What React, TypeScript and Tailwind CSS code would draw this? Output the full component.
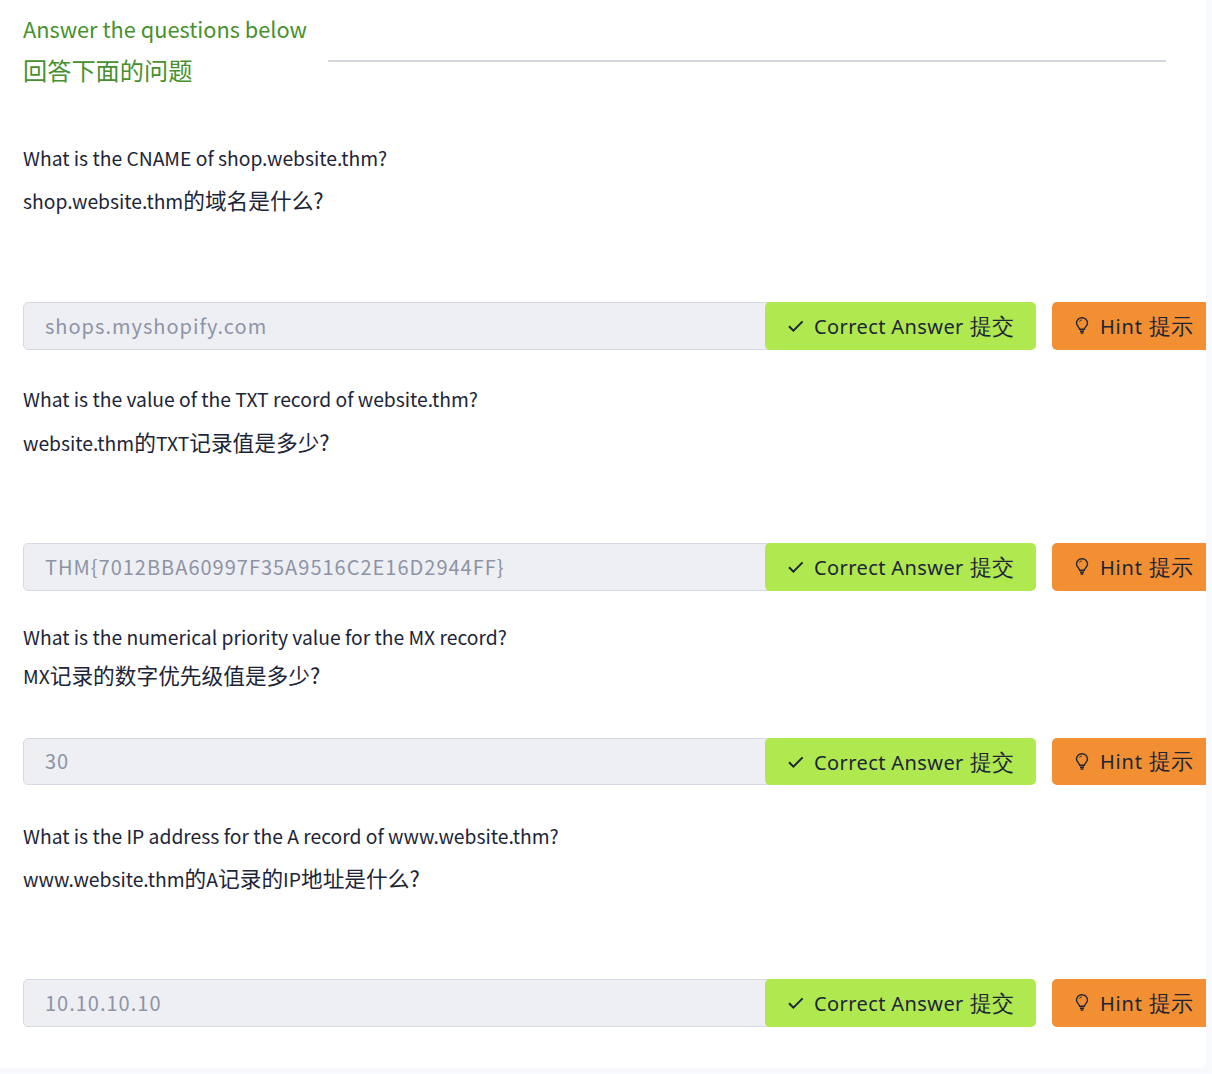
const cjk = '[font-family:"Noto_Sans_CJK_SC",sans-serif]';

const questions = [
  {
    en: 'What is the CNAME of shop.website.thm?',
    zh: 'shop.website.thm的域名是什么?',
    answer: 'shops.myshopify.com',
    gap: 'mt-[7px]',
    wrap: 'mt-[49px]',
    row: 'mt-[83px]',
    rowH: 'h-12',
  },
  {
    en: 'What is the value of the TXT record of website.thm?',
    zh: 'website.thm的TXT记录值是多少?',
    answer: 'THM{7012BBA60997F35A9516C2E16D2944FF}',
    gap: 'mt-[8px]',
    wrap: 'mt-[31px]',
    row: 'mt-[82px]',
    rowH: 'h-12',
  },
  {
    en: 'What is the numerical priority value for the MX record?',
    zh: 'MX记录的数字优先级值是多少?',
    answer: '30',
    gap: 'mt-[3px]',
    wrap: 'mt-[28px]',
    row: 'mt-[44px]',
    rowH: 'h-[47px]',
  },
  {
    en: 'What is the IP address for the A record of www.website.thm?',
    zh: 'www.website.thm的A记录的IP地址是什么?',
    answer: '10.10.10.10',
    gap: 'mt-[7px]',
    wrap: 'mt-[33px]',
    row: 'mt-[82px]',
    rowH: 'h-12',
  },
];

// latin and chinese runs are different sizes in the original
function Mixed({ text }: { text: string }) {
  return (
    <>
      {text.split(/([\u4e00-\u9fff?]+)/).map((part, i) =>
        i % 2 === 1 ? (
          <span key={i} className="text-[21.7px] leading-none">
            {part}
          </span>
        ) : (
          part
        ),
      )}
    </>
  );
}

function Bulb() {
  return (
    <svg width="14" height="18" viewBox="0 0 14 18" fill="none" stroke="currentColor" className="mr-[11px] shrink-0">
      <path d="M4.6 12.2C4.4 10 1.5 8.8 1.5 5.9a5.5 5.2 0 0 1 11 0c0 2.9-2.9 4.1-3.1 6.3z" strokeWidth="1.4" />
      <path d="M4.2 4.6A3 3 0 0 1 6.8 3" strokeWidth="1" />
      <path d="M5 14.2h4M5.6 16h2.8" strokeWidth="1.6" />
    </svg>
  );
}

function AnswerRow({ answer, row, rowH }: { answer: string; row: string; rowH: string }) {
  return (
    <div className={`flex items-stretch ${rowH} ${row}`}>
      <div className="flex w-[752px] shrink-0 items-center rounded-l-[5px] border border-[#d5d9e2] bg-[#eeeff3] pb-[1px] pl-[21px] text-[20px] tracking-[1px] text-[#8c94a6]">
        {answer}
      </div>
      <div className="-ml-[10px] flex w-[271px] shrink-0 items-center rounded-[5px] bg-[#b0e94f] pl-[23px] text-[#1c2538]">
        <svg width="16" height="12" viewBox="0 0 16 12" fill="none" stroke="currentColor" strokeWidth="2" className="mr-[10px] shrink-0">
          <path d="M1 6.2l4.4 4.4L14.6 1.4" />
        </svg>
        <span className="whitespace-nowrap pt-[2px] font-['Noto_Sans',sans-serif] text-[20px] tracking-[0.4px]">
          Correct Answer <span className="ml-[1px] text-[21.7px] leading-none tracking-normal">提交</span>
        </span>
      </div>
      <div className="ml-4 flex w-[170px] shrink-0 items-center rounded-[5px] bg-[#f38f33] pl-[23px] text-[#1c2538]">
        <Bulb />
        <span className="whitespace-nowrap pt-[1px] font-['Noto_Sans',sans-serif] text-[20px] tracking-[0.8px]">
          Hint <span className="text-[21.7px] leading-none tracking-normal">提示</span>
        </span>
      </div>
    </div>
  );
}

export default function App() {
  return (
    <div className="h-[1074px] w-[1212px] overflow-hidden bg-[#f8f9fc]">
      <div className={`h-[1068px] w-[1206px] overflow-hidden rounded-br-[6px] bg-white pl-[23px] ${cjk}`}>
        <div className="flex items-start pt-[9px]">
          <h2 className="w-[305px] shrink-0 text-[#46902e]">
            <div className="whitespace-nowrap text-[21.75px] leading-[40px]">Answer the questions below</div>
            <div className="text-[24.2px] leading-[42px]">回答下面的问题</div>
          </h2>
          <div className="mr-[40px] mt-[51px] h-[2px] flex-1 bg-[#d2d6dd]" />
        </div>
        {questions.map((q) => (
          <div key={q.answer} className={q.wrap}>
            <p className="text-[19.3px] leading-[36px] text-[#1c2538]">{q.en}</p>
            <p className={`text-[19.3px] leading-[36px] text-[#1c2538] ${q.gap}`}>
              <Mixed text={q.zh} />
            </p>
            <AnswerRow answer={q.answer} row={q.row} rowH={q.rowH} />
          </div>
        ))}
      </div>
    </div>
  );
}
